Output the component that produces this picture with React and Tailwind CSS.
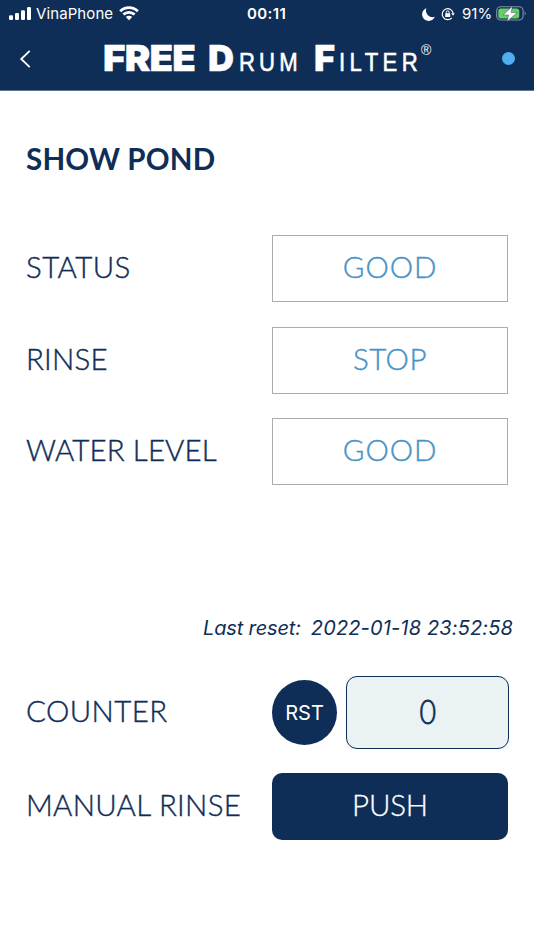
const NAVY = 'text-[#0f2e57]';

function StatusBar() {
  return (
    <div className="flex h-7 items-center text-white font-['Inter',sans-serif]">
      <svg className="ml-2 shrink-0" width="24" height="14" viewBox="0 0 24 14" fill="currentColor">
        <rect x="1" y="8.2" width="4" height="4.8" rx="1.2" />
        <rect x="7" y="6" width="4" height="7" rx="1.2" />
        <rect x="13" y="3.2" width="4" height="9.8" rx="1.2" />
        <rect x="19" y="0" width="4" height="13" rx="1.2" />
      </svg>
      <span className="ml-1 w-[78px] whitespace-nowrap text-[15px] tracking-[0.1px]">VinaPhone</span>
      <svg className="ml-[5px] mb-px shrink-0" width="20" height="15" viewBox="0 0 20 15" fill="none" stroke="currentColor" strokeWidth="2.8">
        <path d="M1.2 5.2a12.5 12.5 0 0 1 17.6 0" />
        <path d="M4.4 8.6a8 8 0 0 1 11.2 0" />
        <path d="M10 14.2 6.8 11a4.6 4.6 0 0 1 6.4 0Z" fill="currentColor" stroke="none" />
      </svg>
      <span className="ml-[108px] w-[42px] whitespace-nowrap text-[15px] font-semibold tracking-[0.4px]">00:11</span>
      <svg className="ml-[133px] shrink-0" width="13" height="13" viewBox="0 0 13 13" fill="currentColor">
        <path d="M4.4.3A6.5 6.5 0 1 0 12.7 8.8 6.6 6.6 0 0 1 4.4.3Z" />
      </svg>
      <svg className="ml-[6px] shrink-0" width="14" height="14" viewBox="0 0 14 14" fill="none" stroke="currentColor">
        <path d="M10.8 10.9A5.5 5.5 0 1 1 12.2 6.5" strokeWidth="1.2" />
        <path d="M10.2 6.2h3.6L12 8.8Z" fill="currentColor" stroke="none" />
        <rect x="4.2" y="6.3" width="5" height="3.7" rx=".6" fill="currentColor" stroke="none" />
        <path d="M5.3 6.5V5.2a1.4 1.4 0 0 1 2.8 0v1.3" strokeWidth="1" />
      </svg>
      <span className="ml-[7px] w-[31px] whitespace-nowrap text-[15px]">91%</span>
      <svg className="ml-[3px] mb-px shrink-0" width="31" height="16" viewBox="0 0 31 16">
        <rect x=".7" y=".8" width="26.4" height="13.2" rx="4" fill="none" stroke="#8393aa" strokeWidth="1.1" />
        <path d="M28.7 5.2q2 2.2 0 4.4Z" fill="#8393aa" />
        <rect x="2.3" y="2.4" width="21" height="10" rx="2.5" fill="#65cf64" />
        <path d="M16.6.1 7.2 8.9h5.4l-1.5 6.6L21.2 6.5h-6.1Z" fill="#fff" stroke="#0f2e57" strokeWidth=".4" />
      </svg>
    </div>
  );
}

function Brand() {
  return (
    <div className="ml-[70px] flex h-[64px] items-baseline whitespace-nowrap text-white">
      <span className="w-[105px] origin-left scale-x-[1.07] font-['Inter',sans-serif] text-[36px] leading-[63px] font-black tracking-[-0.8px] [-webkit-text-stroke:0.4px_white]">FREE</span>
      <span className="w-[31px] font-['Inter',sans-serif] text-[36px] leading-[63px] font-black [-webkit-text-stroke:0.4px_white]">D</span>
      <span className="w-[75px] origin-left scale-x-[0.85] font-['Liberation_Sans',sans-serif] text-[26px] tracking-[4.9px] [-webkit-text-stroke:0.6px_white]">RUM</span>
      <span className="w-[25px] font-['Inter',sans-serif] text-[36px] leading-[63px] font-black [-webkit-text-stroke:0.4px_white]">F</span>
      <span className="w-[82px] origin-left scale-x-[0.85] font-['Liberation_Sans',sans-serif] text-[26px] tracking-[5.2px] [-webkit-text-stroke:0.6px_white]">ILTER</span>
      <span className="self-start pt-[13px] font-['Liberation_Sans',sans-serif] text-[14px] leading-[20px]">®</span>
    </div>
  );
}

function Label({ children, className = '' }) {
  return (
    <div className={`w-[246px] shrink-0 whitespace-nowrap pb-[2px] font-['Lato',sans-serif] text-[29.5px] font-light [-webkit-text-stroke:0.4px_#0f2e57] ${NAVY} ${className}`}>
      {children}
    </div>
  );
}

function Reading({ label, labelClass, value, valueClass }) {
  return (
    <div className="flex h-[67px] items-center">
      <Label className={labelClass}>{label}</Label>
      <div className={`flex h-[67px] w-[236px] items-center justify-center border-[1.5px] border-[#acacac] pb-[2px] font-['Lato',sans-serif] text-[29.5px] font-light text-[#4893c8] [-webkit-text-stroke:0.4px_#4893c8] ${valueClass}`}>
        {value}
      </div>
    </div>
  );
}

export default function App() {
  return (
    <div className="h-[950px] w-[534px] overflow-hidden bg-white">
      <header className="h-[91px] border-b border-[#5f7491] bg-[#0f2e57]">
        <StatusBar />
        <div className="flex h-[61px] items-center">
          <svg className="ml-[19px] shrink-0" width="14" height="20" viewBox="0 0 14 20" fill="none" stroke="white" strokeWidth="1.8">
            <path d="M10.7 1.8 2.2 10l8.5 8.2" />
          </svg>
          <Brand />
          <div className="ml-auto mr-[19.5px] size-[13px] rounded-full bg-[#50aff0]" />
        </div>
      </header>
      <main className="flex flex-col pl-[26px]">
        <h1 className={`mt-[49px] h-[38px] font-['Lato',sans-serif] text-[29.5px] leading-[38px] font-bold tracking-[0.2px] ${NAVY}`}>SHOW POND</h1>
        <section className="mt-[57px] flex flex-col gap-[24.5px]">
          <Reading label="STATUS" labelClass="tracking-[0.4px]" value="GOOD" valueClass="tracking-[0.9px]" />
          <Reading label="RINSE" labelClass="tracking-[0.2px]" value="STOP" valueClass="tracking-[0.5px]" />
          <Reading label="WATER LEVEL" labelClass="tracking-[0.1px]" value="GOOD" valueClass="tracking-[0.9px]" />
        </section>
        <p className={`mt-[130px] mr-[21px] flex h-[26px] justify-end gap-[10px] whitespace-nowrap font-['Inter',sans-serif] text-[20px] leading-[26px] italic ${NAVY}`}>
          <span className="tracking-[-0.15px]">Last reset:</span>
          <span className="tracking-[0.15px]">2022-01-18 23:52:58</span>
        </p>
        <div className="mt-[35px] flex h-[73px] items-center">
          <Label className="tracking-[0.4px]">COUNTER</Label>
          <button className="size-[65px] shrink-0 rounded-full bg-[#0f2e57] font-['Inter',sans-serif] text-[20px] text-white">RST</button>
          <div className="ml-[9px] h-[73px] w-[163px] bg-[#f5f9fa]">
            <div className={`flex h-full w-full items-center justify-center rounded-[11px] border-[1.5px] border-[#0f2e57] bg-[#eaf2f4] pb-[5px] font-['Lato',sans-serif] text-[34px] font-light [-webkit-text-stroke:0.8px_#0f2e57] ${NAVY}`}>
              <span className="scale-x-[0.84]">0</span>
            </div>
          </div>
        </div>
        <div className="mt-[24px] flex h-[67px] items-center">
          <Label className="tracking-[0.3px]">MANUAL RINSE</Label>
          <button className="h-[67px] w-[236px] rounded-[10px] bg-[#0f2e57] pb-[2px] font-['Lato',sans-serif] text-[29.5px] font-light tracking-[-0.2px] text-white [-webkit-text-stroke:0.3px_white]">PUSH</button>
        </div>
      </main>
    </div>
  );
}
